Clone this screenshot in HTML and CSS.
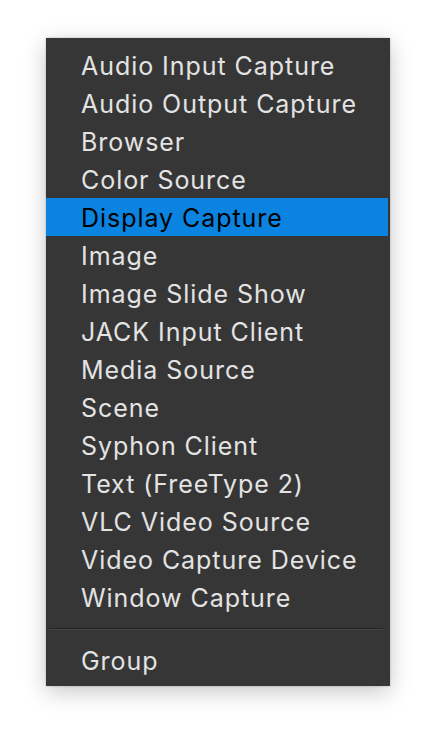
FILE: index.html
```html
<!DOCTYPE html>
<html>
<head>
<meta charset="utf-8">
<link rel="stylesheet" href="styles.css">
</head>
<body>
<div class="page">
  <div class="menu">
    <div class="item">Audio Input Capture</div>
    <div class="item">Audio Output Capture</div>
    <div class="item">Browser</div>
    <div class="item">Color Source</div>
    <div class="item active">Display Capture</div>
    <div class="item">Image</div>
    <div class="item">Image Slide Show</div>
    <div class="item">JACK Input Client</div>
    <div class="item">Media Source</div>
    <div class="item">Scene</div>
    <div class="item">Syphon Client</div>
    <div class="item">Text (FreeType 2)</div>
    <div class="item">VLC Video Source</div>
    <div class="item">Video Capture Device</div>
    <div class="item">Window Capture</div>
    <div class="sep"></div>
    <div class="item">Group</div>
  </div>
</div>
</body>
</html>
```
FILE: styles.css
```css
html, body {
  margin: 0;
  padding: 0;
  background: #ffffff;
}
.page {
  width: 436px;
  height: 740px;
  padding: 38px 0 0 46px;
  box-sizing: border-box;
}
.menu {
  width: 344px;
  background: #363636;
  padding: 8px 0 7px;
  box-sizing: border-box;
  box-shadow: 0 6px 22px rgba(0, 0, 0, 0.22), 0 0 2px rgba(0, 0, 0, 0.25);
  font-family: Inter, "Noto Sans", sans-serif;
  font-size: 25px;
  letter-spacing: 0.95px;
  color: #e3e3e3;
}
.item {
  height: 38px;
  box-sizing: border-box;
  padding-top: 2px;
  line-height: 36px;
  padding-left: 35px;
  margin-right: 2px;
  white-space: nowrap;
}
.item.active {
  background: #0a84e0;
  color: #000000;
}
.sep {
  height: 25px;
  display: flex;
  flex-direction: column;
  justify-content: center;
  margin: 0 7px 0 3px;
}
.sep::before {
  content: "";
  display: block;
  height: 1px;
  background: #222222;
  border-bottom: 1px solid #474747;
}
```
